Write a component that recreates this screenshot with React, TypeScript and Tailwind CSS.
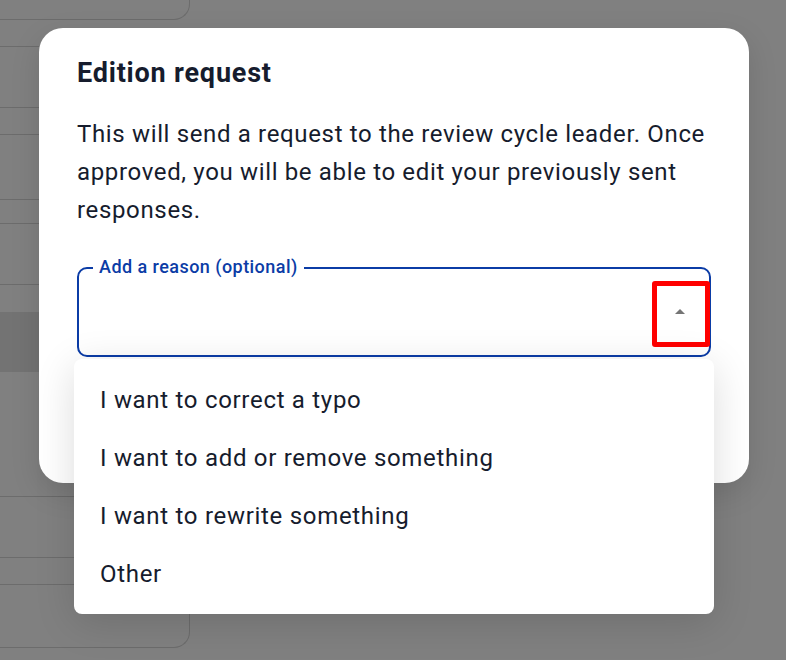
import * as React from "react";

const reasons = [
	"I want to correct a typo",
	"I want to add or remove something",
	"I want to rewrite something",
	"Other",
];

// rows of the page sitting behind the overlay (only the left strip shows)
function BackgroundList() {
	return (
		<div className="flex w-[190px] flex-col">
			<div className="h-[20px] rounded-br-[16px] border-r border-b border-[#6c6c6c]" />
			<div className="h-[27px] border-b border-[#6c6c6c]" />
			<div className="h-[61px] border-b border-[#6c6c6c]" />
			<div className="h-[27px] border-b border-[#6c6c6c]" />
			<div className="h-[65px] border-b border-[#6c6c6c]" />
			<div className="h-[24px] border-b border-[#6c6c6c]" />
			<div className="h-[61px] border-b border-[#6c6c6c]" />
			<div className="h-[27px]" />
			<div className="h-[60px] bg-[#737373]" />
			<div className="h-[125px] border-b border-[#6c6c6c]" />
			<div className="h-[61px] border-b border-[#6c6c6c]" />
			<div className="h-[27px] border-b border-[#6c6c6c]" />
			<div className="h-[63px] rounded-br-[16px] border-r border-b border-[#6c6c6c]" />
		</div>
	);
}

export default function App() {
	return (
		<div
			className="relative h-[660px] w-[786px] overflow-hidden bg-[#808080]"
			style={{ fontFamily: "Roboto, 'Liberation Sans', sans-serif" }}
		>
			<BackgroundList />

			{/* dialog */}
			<div className="absolute left-[39px] top-[28px] h-[455px] w-[710px] rounded-[24px] bg-white px-[38px] pt-[29px] shadow-[0_10px_30px_rgba(0,0,0,0.12)]">
				<h2 className="text-[27px] font-bold leading-[32px] tracking-[0.8px] text-[#161c2d]">
					Edition request
				</h2>
				<p className="mt-[26px] text-[24px] leading-[38px] tracking-[0.65px] text-[#161c2d]">
					This will send a request to the review cycle leader. Once approved,
					you will be able to edit your previously sent responses.
				</p>

				<div className="relative mt-[38px] flex h-[90px] items-center justify-end rounded-[10px] border-2 border-[#0b3ca6] pr-[17px]">
					<span className="absolute -top-[12px] left-[14px] bg-white px-[6px] text-[18px] font-medium leading-[20px] tracking-[0.45px] text-[#0b3ca6]">
						Add a reason (optional)
					</span>
					<svg viewBox="0 0 24 24" className="h-6 w-6 fill-[#757575]">
						<path d="M7 14l5-5 5 5z" />
					</svg>
					{/* highlight marker */}
					<div className="absolute left-[573px] top-[12px] h-[66px] w-[58px] rounded-[3px] border-[5px] border-[#ff0000]" />
				</div>
			</div>

			{/* open select menu */}
			<ul className="absolute left-[74px] top-[359px] h-[255px] w-[640px] rounded-[8px] bg-white pt-[12px] shadow-[0_8px_40px_rgba(0,0,0,0.14)]">
				{reasons.map((r) => (
					<li
						key={r}
						className="flex h-[58px] items-center px-[26px] text-[24px] tracking-[0.7px] text-[#161c2d]"
					>
						{r}
					</li>
				))}
			</ul>
		</div>
	);
}
